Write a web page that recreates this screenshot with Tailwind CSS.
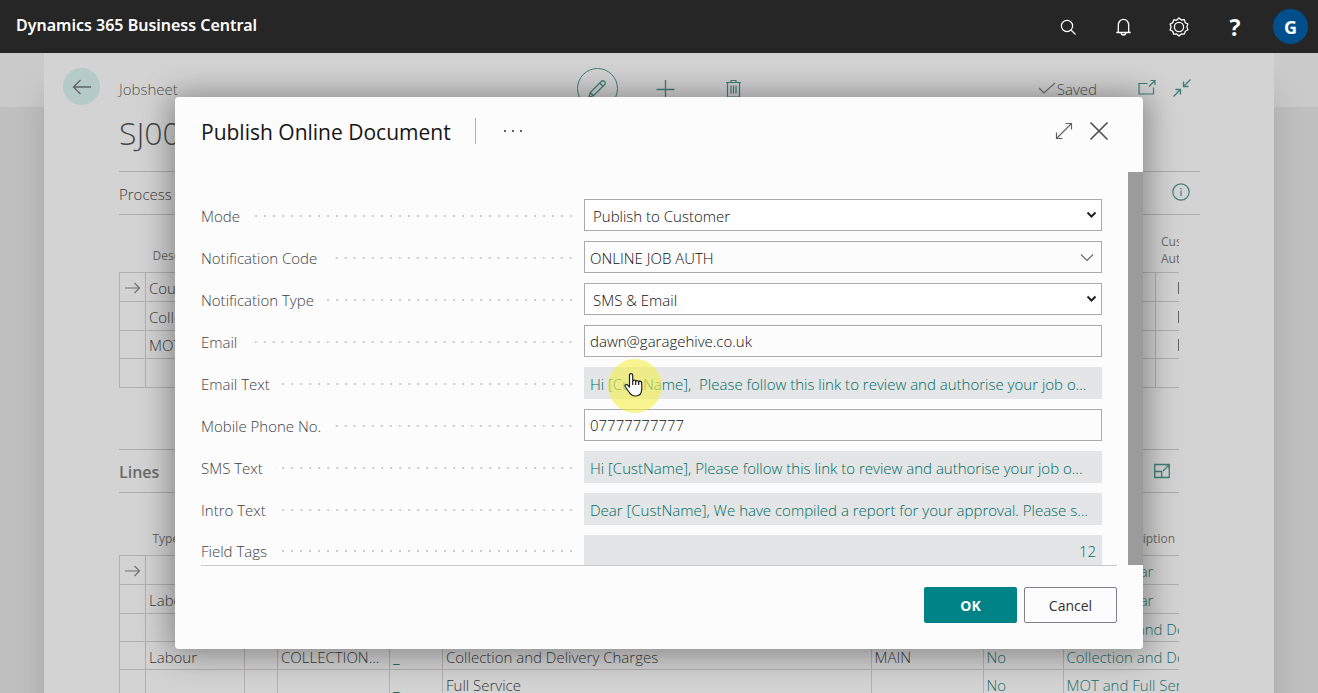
<!DOCTYPE html>
<html lang="en">
<head>
<meta charset="utf-8">
<title>Dynamics 365 Business Central</title>
<script src="https://cdn.jsdelivr.net/npm/@tailwindcss/browser@4"></script>
</head>
<body class="h-screen overflow-hidden bg-[#c0bfbf] font-['Open_Sans','Noto_Sans',sans-serif] text-[15px] leading-5 font-light text-[#383838]">
<div class="flex h-full flex-col">

  <!-- Product bar -->
  <header class="flex h-[53px] shrink-0 items-center justify-between bg-[#262626] pl-4 pr-[10px] text-white">
    <a href="#" class="pb-1 font-['Noto_Sans',sans-serif] text-base font-semibold">Dynamics 365 Business Central</a>
    <nav class="flex items-center gap-9">
      <button aria-label="Search"><svg class="size-5" viewBox="0 0 20 20" fill="none" stroke="currentColor" stroke-width="1.2"><circle cx="10" cy="9" r="5.6"/><path d="M14 13l4.5 4.5"/></svg></button>
      <button aria-label="Notifications"><svg class="size-5" viewBox="0 0 20 20" fill="none" stroke="currentColor" stroke-width="1.3"><path d="M5.300 15.500V8a5.200 5.700 0 0 1 10.400 0v7.500M3.300 15.500h14.400M8.300 16a2.200 2 0 0 0 4.400 0"/></svg></button>
      <button aria-label="Settings"><svg class="size-5" viewBox="0 0 20 20" fill="none" stroke="currentColor" stroke-width="1.300"><circle cx="10" cy="10" r="4.600"/><path stroke-linejoin="round" d="M10 1l2.300 2 3-.300.900 2.900 2.700 1.400-1 2.900 1 2.900-2.600 1.400-1 2.900-3-.200L10 19l-2.300-2-3 .200-1-2.900-2.600-1.400 1-2.900-1-2.900 2.700-1.400.900-2.900 3 .300z"/></svg></button>
      <button aria-label="Help" class="w-5 text-[23px] leading-5 font-bold">?</button>
      <button aria-label="Account" class="-ml-2 flex size-[35px] items-center justify-center rounded-full bg-[#004e8c] text-lg font-bold">G</button>
    </nav>
  </header>

  <main class="relative min-h-0 flex-1 overflow-hidden">
    <div class="flex h-full flex-col">
      <div class="h-[54px] shrink-0 bg-[#cacaca]"></div>
      <div class="flex-1"></div>
    </div>

    <!-- Job sheet page -->
    <section class="absolute inset-x-11 inset-y-0 overflow-hidden bg-[#d3d3d3] pl-[75px] pr-[74px] shadow-[0_40px_30px_rgba(0,0,0,0.13)]">
      <div class="relative flex h-[70px] items-center">
        <button aria-label="Back" class="absolute -left-14 top-[15px] flex size-[37px] items-center justify-center rounded-full bg-[#b4cbc9]"><svg class="h-4 w-5" viewBox="0 0 20 16" fill="none" stroke="#5c6464" stroke-width="1.3"><path d="M19 8H2M8.500 1L1.500 8l7 7"/></svg></button>
        <span class="pt-[2px] text-[#505050]">Jobsheet</span>
        <div class="absolute left-1/2 top-[15px] -ml-[83px] flex items-center gap-[37px] text-[#3f7f79]">
          <button aria-label="Edit" class="flex size-[41px] items-center justify-center rounded-full border border-current"><svg class="size-5" viewBox="0 0 20 20" fill="none" stroke="currentColor" stroke-width="1.300"><path d="M2 18l1.300-4.500L14.500 2.300a1.800 1.800 0 0 1 2.600 0l.600.600a1.800 1.800 0 0 1 0 2.600L6.500 16.700zM12.800 4l3.200 3.200M3.300 13.500l3.200 3.200"/></svg></button>
          <button aria-label="New"><svg class="size-5" viewBox="0 0 20 20" fill="none" stroke="currentColor" stroke-width="1.300"><path d="M10.500 1v18M1.500 10.500h18"/></svg></button>
          <button aria-label="Delete" class="ml-3"><svg class="size-5" viewBox="0 0 20 20" fill="none" stroke="currentColor" stroke-width="1.200"><path d="M2 3.500h15M7 3.500V1.500h5v2M3.500 3.500V18h12V3.500M7 6.500v8M9.500 6.500v8M12 6.500v8"/></svg></button>
        </div>
        <div class="ml-auto flex items-center gap-[17px] pr-[9px] text-[#3f7f79]">
          <span class="mr-6 flex items-center text-[#505050]"><svg class="h-4 w-5" viewBox="0 0 20 16" fill="none" stroke="#707070" stroke-width="1.200"><path d="M2 8l5 5L18 3"/></svg><span class="pt-[2px]">Saved</span></span>
          <button aria-label="Open in new window"><svg class="size-[18px]" viewBox="0 0 18 18" fill="none" stroke="currentColor" stroke-width="1.200"><path d="M9.500 4.500H1v10.500h14.500V8.500M11 7.500l6-6M12.500 1.500H17V6"/></svg></button>
          <button aria-label="Collapse"><svg class="size-[18px]" viewBox="0 0 18 18" fill="none" stroke="currentColor" stroke-width="1.300"><path d="M17.500.500l-7 7M10.500 2.500v5h5M.500 17.500l7-7M7.500 15.500v-5h-5"/></svg></button>
        </div>
      </div>
      <h1 class="h-12 text-[32px] leading-5 font-light"><span class="text-[#484848]">SJ001234</span></h1>
      <div class="flex h-11 items-center justify-between border-y border-[#b0acad] pr-[10px]">
        <button class="pt-[2px]">Process</button>
        <button aria-label="Details" class="pb-[3px] text-[#3f7f79]"><svg class="size-[18px]" viewBox="0 0 18 18" fill="none" stroke="currentColor" stroke-width="1.200"><circle cx="9" cy="9" r="8.200"/><path d="M9 7.800V13M9 5v1.400"/></svg></button>
      </div>

      <div class="mr-[21px] overflow-hidden">
        <table class="w-full table-fixed border-collapse">
          <colgroup><col class="w-[26px]"><col><col class="w-6"></colgroup>
          <thead>
            <tr class="h-[57px] text-left align-bottom text-xs text-[#6b6b6b]">
              <th></th><th class="pb-2 pl-[7px] font-normal">Description</th>
              <th class="overflow-hidden pb-[5px] pl-[6px] leading-[17px] font-normal">Cust. Auth.</th>
            </tr>
          </thead>
          <tbody class="[&_td]:pt-[2px] [&_td]:pb-0">
            <tr class="h-[29px] border border-r-0 border-[#b3afb0]"><td class="border-r border-[#b3afb0] pl-[5px]"><svg class="h-3 w-4" viewBox="0 0 16 12" fill="none" stroke="#707070" stroke-width="1.200"><path d="M0 6h14.500M9.500 1l5 5-5 5"/></svg></td><td class="border-r border-[#b3afb0] pl-[3px]">Courtesy Car</td><td class="text-right"><span class="inline-block h-3 w-px bg-[#666]"></span></td></tr>
            <tr class="h-[29px] border border-r-0 border-[#b3afb0]"><td class="border-r border-[#b3afb0]"></td><td class="border-r border-[#b3afb0] pl-[3px]">Collection and Delivery</td><td class="text-right"><span class="inline-block h-3 w-px bg-[#666]"></span></td></tr>
            <tr class="h-[28px] border border-r-0 border-[#b3afb0]"><td class="border-r border-[#b3afb0]"></td><td class="border-r border-[#b3afb0] pl-[3px]">MOT and Full Service</td><td class="text-right"><span class="inline-block h-3 w-px bg-[#666]"></span></td></tr>
            <tr class="h-[29px] border border-r-0 border-[#b3afb0]"><td class="border-r border-[#b3afb0]"></td><td class="border-r border-[#b3afb0]"></td><td></td></tr>
          </tbody>
        </table>

        <div class="mt-[61px] flex h-11 items-center justify-between border-y border-[#b0acad] pr-[9px]">
          <h2 class="pt-[2px] text-base font-semibold text-[#6a6a6a]">Lines</h2>
          <button aria-label="Expand lines" class="text-[#3f7f79]"><svg class="size-4" viewBox="0 0 16 16" fill="none" stroke="currentColor" stroke-width="1.300"><path d="M.700 1.500h14.600v13H.700zM.700 8.500h7v6M9 8l6-6M10.500 1.800h4.500v4.500"/></svg></button>
        </div>

        <table class="w-full table-fixed border-collapse whitespace-nowrap">
          <colgroup><col class="w-[26px]"><col class="w-[99px]"><col class="w-[33px]"><col class="w-28"><col class="w-[53px]"><col><col class="w-28"><col class="w-20"><col class="w-[116px]"></colgroup>
          <thead>
            <tr class="h-[63px] text-left align-bottom text-xs text-[#6b6b6b]">
              <th></th><th class="pb-2 pl-[7px] font-normal">Type</th><th colspan="6"></th><th class="pb-2 pr-1 text-right font-normal">Description</th>
            </tr>
          </thead>
          <tbody class="[&_td]:overflow-hidden [&_td]:border-r [&_td]:border-[#b3afb0] [&_td]:pt-[2px] [&_td]:pb-0 [&_td]:pl-[3px] [&_td:last-child]:border-r-0">
            <tr class="h-[29px] border border-r-0 border-[#b3afb0]"><td><svg class="ml-[2px] h-3 w-4" viewBox="0 0 16 12" fill="none" stroke="#707070" stroke-width="1.200"><path d="M0 6h14.500M9.500 1l5 5-5 5"/></svg></td><td></td><td></td><td></td><td></td><td></td><td></td><td></td><td class="text-[#206e67]">Courtesy Car</td></tr>
            <tr class="h-[29px] border border-r-0 border-[#b3afb0]"><td></td><td>Labour</td><td></td><td></td><td></td><td></td><td></td><td></td><td class="text-[#206e67]">Courtesy Car</td></tr>
            <tr class="h-[28px] border border-r-0 border-[#b3afb0]"><td></td><td></td><td></td><td></td><td></td><td></td><td></td><td></td><td class="text-[#206e67]">Collection and Delivery</td></tr>
            <tr class="h-[28px] border border-r-0 border-[#b3afb0]"><td></td><td>Labour</td><td></td><td>COLLECTION...</td><td class="font-normal text-[#206e67]">_</td><td>Collection and Delivery Charges</td><td>MAIN</td><td class="text-[#206e67]">No</td><td class="text-[#206e67]">Collection and Delivery</td></tr>
            <tr class="h-[28px] border border-r-0 border-[#b3afb0]"><td></td><td></td><td></td><td></td><td class="font-normal text-[#206e67]">_</td><td>Full Service</td><td></td><td class="text-[#206e67]">No</td><td class="text-[#206e67]">MOT and Full Service</td></tr>
          </tbody>
        </table>
      </div>
    </section>

    <!-- Publish dialog -->
    <div class="absolute inset-x-0 top-11 flex justify-center">
      <form role="dialog" aria-labelledby="dlg-title" class="flex w-full max-w-[968px] flex-col rounded-sm shadow-[0_2px_32px_4px_rgba(0,0,0,0.38)]">
        <div class="flex h-[75px] items-center rounded-t-sm bg-[#fcfcfc] pl-[26px] pr-[34px] pb-2">
          <h2 id="dlg-title" class="pt-[2px] text-[21px] leading-7 font-medium text-[#151515]">Publish Online Document</h2>
          <span class="ml-6 h-[26px] w-px bg-[#b0b0b0]"></span>
          <button type="button" aria-label="More" class="ml-7"><svg class="h-1 w-[18px]" viewBox="0 0 18 4" fill="#606060"><path d="M0 1h2v2H0zM8 1h2v2H8zM16 1h2v2h-2z"/></svg></button>
          <button type="button" aria-label="Expand" class="ml-auto"><svg class="size-[18px]" viewBox="0 0 18 18" fill="none" stroke="#606060" stroke-width="1.100"><path d="M1.500 16.500l15-15M10.500 1.500h6v6M1.500 10.500v6h6"/></svg></button>
          <button type="button" aria-label="Close" class="ml-4"><svg class="size-5" viewBox="0 0 20 20" fill="none" stroke="#505050" stroke-width="1.700"><path d="M1.500 1.500l17 17M18.500 1.500l-17 17"/></svg></button>
        </div>
        <div class="flex bg-[#9b9b9b]">
          <div class="mr-[15px] flex h-[393px] flex-1 flex-col gap-[10px] overflow-hidden bg-[#fcfcfc] px-[26px] pt-[27px] text-[#101010]">
            <div class="flex h-8 shrink-0 items-center">
              <label for="mode" class="flex w-[383px] items-center gap-3 pt-[2px] text-[#3c4148]">Mode<span class="mr-3 h-[2px] flex-1 bg-[linear-gradient(to_left,#cdcdcd_2px,transparent_2px)] bg-right bg-size-[9px_2px]"></span></label>
              <div class="relative h-8 flex-1"><select id="mode" class="h-8 w-full appearance-none border border-[#aaa] bg-white/50 pl-2 pt-[2px]"><option>Publish to Customer</option></select><svg class="pointer-events-none absolute right-[5px] top-3 h-2 w-[11px]" viewBox="0 0 11 8" fill="none" stroke="#222" stroke-width="2"><path d="M1.500 1.500l4 4 4-4"/></svg></div>
            </div>
            <div class="flex h-8 shrink-0 items-center">
              <label for="code" class="flex w-[383px] items-center gap-3 pt-[2px] text-[#3c4148]">Notification Code<span class="mr-3 h-[2px] flex-1 bg-[linear-gradient(to_left,#cdcdcd_2px,transparent_2px)] bg-right bg-size-[9px_2px]"></span></label>
              <div class="relative h-8 flex-1"><input id="code" value="ONLINE JOB AUTH" class="h-8 w-full border border-[#aaa] pl-[5px] pt-[2px]"><button type="button" aria-label="Look up" class="absolute right-2 top-3"><svg class="h-[9px] w-[14px]" viewBox="0 0 14 9" fill="none" stroke="#666" stroke-width="1.100"><path d="M1 1.500l6 6 6-6"/></svg></button></div>
            </div>
            <div class="flex h-8 shrink-0 items-center">
              <label for="type" class="flex w-[383px] items-center gap-3 pt-[2px] text-[#3c4148]">Notification Type<span class="mr-3 h-[2px] flex-1 bg-[linear-gradient(to_left,#cdcdcd_2px,transparent_2px)] bg-right bg-size-[9px_2px]"></span></label>
              <div class="relative h-8 flex-1"><select id="type" class="h-8 w-full appearance-none border border-[#aaa] bg-white/50 pl-2 pt-[2px]"><option>SMS &amp; Email</option></select><svg class="pointer-events-none absolute right-[5px] top-3 h-2 w-[11px]" viewBox="0 0 11 8" fill="none" stroke="#222" stroke-width="2"><path d="M1.500 1.500l4 4 4-4"/></svg></div>
            </div>
            <div class="flex h-8 shrink-0 items-center">
              <label for="email" class="flex w-[383px] items-center gap-3 pt-[2px] text-[#3c4148]">Email<span class="mr-3 h-[2px] flex-1 bg-[linear-gradient(to_left,#cdcdcd_2px,transparent_2px)] bg-right bg-size-[9px_2px]"></span></label>
              <input id="email" value="dawn@garagehive.co.uk" class="h-8 min-w-0 flex-1 border border-[#aaa] pl-[5px]">
            </div>
            <div class="flex h-8 shrink-0 items-center">
              <span class="flex w-[383px] items-center gap-3 pt-[2px] text-[#3c4148]">Email Text<span class="mr-3 h-[2px] flex-1 bg-[linear-gradient(to_left,#cdcdcd_2px,transparent_2px)] bg-right bg-size-[9px_2px]"></span></span>
              <div class="relative h-8 min-w-0 flex-1 bg-[#e3e5e6]">
                <a href="#" class="block h-8 overflow-hidden pl-[6px] leading-[34px] whitespace-pre text-[#006b61]">Hi [CustName],  Please follow this link to review and authorise your job o...</a>
                <!-- Pointer with click highlight -->
                <span class="absolute -top-2 left-6 size-[54px] rounded-full bg-[#f5f04a]/60"></span>
                <svg class="absolute left-10 top-[6px] h-6 w-[19px]" viewBox="0 0 19 24" fill="#fff" stroke="#222" stroke-width="1.200" stroke-linejoin="round"><path d="M5.500 14V2.200a1.600 1.600 0 0 1 3.200 0V8a1.600 1.600 0 0 1 3 .500 1.600 1.600 0 0 1 3 .600 1.600 1.600 0 0 1 3 1V16c0 4-2.200 7-6.200 7-3.500 0-5-1.500-6.500-4L1.200 13.500c-.800-1.700 1-2.700 2.300-1.500z"/><path fill="none" d="M8.700 8v4M11.700 8.500V12M14.700 9.100V12"/></svg>
              </div>
            </div>
            <div class="flex h-8 shrink-0 items-center">
              <label for="phone" class="flex w-[383px] items-center gap-3 pt-[2px] text-[#3c4148]">Mobile Phone No.<span class="mr-3 h-[2px] flex-1 bg-[linear-gradient(to_left,#cdcdcd_2px,transparent_2px)] bg-right bg-size-[9px_2px]"></span></label>
              <input id="phone" value="07777777777" class="h-8 min-w-0 flex-1 border border-[#aaa] pl-[5px]">
            </div>
            <div class="flex h-8 shrink-0 items-center">
              <span class="flex w-[383px] items-center gap-3 pt-[2px] text-[#3c4148]">SMS Text<span class="mr-3 h-[2px] flex-1 bg-[linear-gradient(to_left,#cdcdcd_2px,transparent_2px)] bg-right bg-size-[9px_2px]"></span></span>
              <a href="#" class="h-8 min-w-0 flex-1 overflow-hidden bg-[#e3e5e6] pl-[6px] leading-[34px] whitespace-pre text-[#006b61]">Hi [CustName], Please follow this link to review and authorise your job o...</a>
            </div>
            <div class="flex h-8 shrink-0 items-center">
              <span class="flex w-[383px] items-center gap-3 pt-[2px] text-[#3c4148]">Intro Text<span class="mr-3 h-[2px] flex-1 bg-[linear-gradient(to_left,#cdcdcd_2px,transparent_2px)] bg-right bg-size-[9px_2px]"></span></span>
              <a href="#" class="h-8 min-w-0 flex-1 overflow-hidden bg-[#e3e5e6] pl-[6px] leading-[34px] whitespace-pre text-[#006b61]">Dear [CustName], We have compiled a report for your approval. Please s...</a>
            </div>
            <div class="flex h-8 shrink-0 items-center">
              <span class="flex w-[383px] items-center gap-3 text-[#3c4148]">Field Tags<span class="mr-3 h-[2px] flex-1 bg-[linear-gradient(to_left,#cdcdcd_2px,transparent_2px)] bg-right bg-size-[9px_2px]"></span></span>
              <a href="#" class="h-8 flex-1 bg-[#e3e5e6] px-[6px] text-right leading-8 text-[#006b61]">12</a>
            </div>
          </div>
        </div>
        <div class="rounded-b-sm bg-[#fcfcfc] px-[26px]">
          <div class="flex h-[84px] justify-end gap-[7px] border-t border-[#c8c8c8] pt-[21px]">
            <button type="submit" class="h-9 w-[93px] rounded-xs bg-[#008387] pt-[2px] text-sm font-bold text-white">OK</button>
            <button type="button" class="h-9 w-[93px] rounded-xs border border-[#808088] pt-[2px] text-sm font-medium text-[#303030]">Cancel</button>
          </div>
        </div>
      </form>
    </div>
  </main>
</div>
</body>
</html>
